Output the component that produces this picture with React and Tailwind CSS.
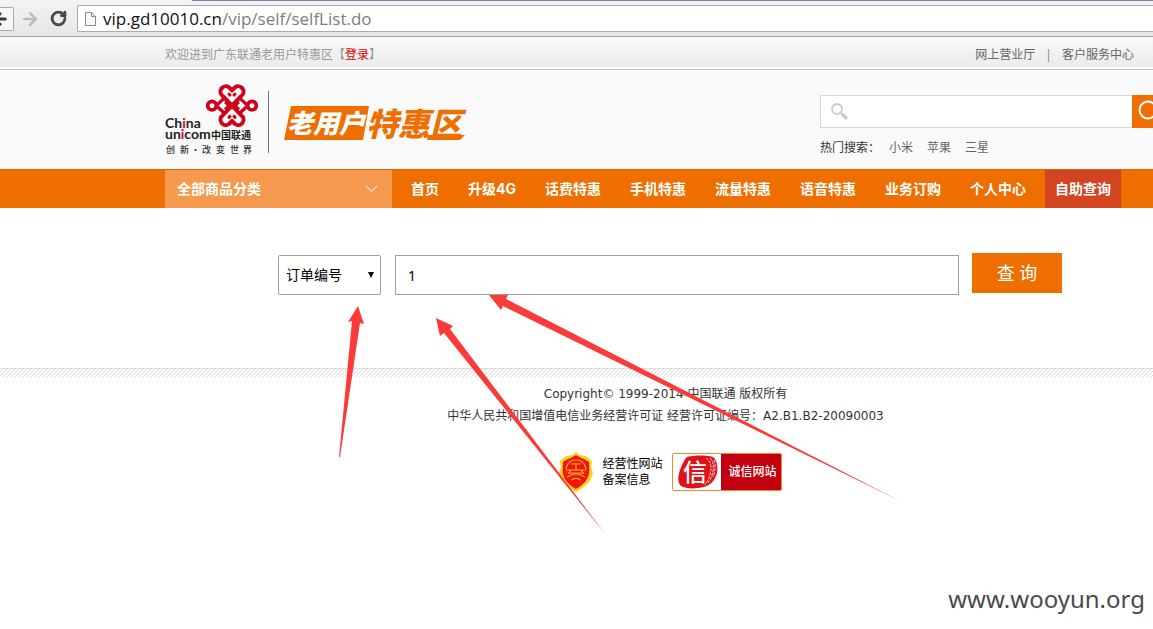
import React from "react";
import { ArrowLeft, ArrowRight, RotateCw } from "lucide-react";

const NAV_ITEMS = ["首页", "升级4G", "话费特惠", "手机特惠", "流量特惠", "语音特惠", "业务订购", "个人中心"];
const HOT_WORDS = ["小米", "苹果", "三星"];

function BrowserBar() {
  return (
    <div className="border-b border-[#a0a0a0] bg-gradient-to-b from-[#f4f4f4] to-[#e6e6e6]">
      <div className="ml-48 h-px bg-[#7f86a3]" />
      <div className="flex h-[35px] items-center">
        <button
          type="button"
          aria-label="后退"
          className="flex h-6 w-[14px] items-center justify-end overflow-hidden rounded-r-xs border border-l-0 border-[#a9a9a9] bg-[#f6f6f6] pr-1 text-[#333]"
        >
          <ArrowLeft size={18} strokeWidth={4} className="shrink-0" />
        </button>
        <button type="button" aria-label="前进" className="ml-1.5 text-[#bdbdbd]">
          <ArrowRight size={20} strokeWidth={3} />
        </button>
        <button type="button" aria-label="重新加载" className="ml-2.5 text-[#4a4a4a]">
          <RotateCw size={17} strokeWidth={4} />
        </button>
        <div className="ml-2.5 flex h-[27px] flex-1 items-center rounded-l-xs border border-r-0 border-[#ababab] bg-white pl-1.5">
          <svg width="13" height="16" viewBox="0 0 13 16" fill="none" stroke="#8a8a8a">
            <path d="M1.5 1.5h6l4 4v9h-10z" fill="#fafafa" />
            <path d="M7.5 1.5v4h4" />
          </svg>
          <span className="pl-1.5 font-['Open_Sans','Noto_Sans_CJK_SC',sans-serif] text-[17px] leading-6 text-[#7d7d7d]">
            <span className="text-[#111]">vip.gd10010.cn</span>/vip/self/selfList.do
          </span>
        </div>
      </div>
    </div>
  );
}

function TopBar() {
  return (
    <div className="border-b border-[#c8c8c8] bg-white pb-0.5 text-xs leading-6">
      <div className="bg-gradient-to-b from-[#f9f9f9] to-[#ebebeb] pt-1.5">
        <div className="mx-auto flex w-[1001px] text-[#999]">
          <p>
            欢迎进到广东联通老用户特惠区【<a href="#login" className="text-[#e00000]">登录</a>】
          </p>
          <div className="ml-auto flex gap-2.5 pr-8 text-[#666]">
            <a href="#hall">网上营业厅</a>
            <span className="text-[#888]">|</span>
            <a href="#service">客户服务中心</a>
          </div>
        </div>
      </div>
    </div>
  );
}

function Logo() {
  return (
    <svg width="310" height="80" viewBox="0 0 310 80" role="img" aria-label="中国联通 老用户特惠区">
      <g transform="translate(38 2) scale(.3333)" fill="none" stroke="#d0021b" strokeWidth="12" strokeLinejoin="round">
        <path d="M87 74 59 45A16 16 0 0 1 78 19L87 28 96 19A16 16 0 0 1 115 45Z" />
        <path d="M87 74 59 103A16 16 0 0 0 78 129L87 120 96 129A16 16 0 0 0 115 103Z" />
        <path d="M40 74 63 52 M40 74 63 96 M134 74 111 52 M134 74 111 96" strokeWidth="10" />
        <path d="M66 63 78 74 66 85 M108 63 96 74 108 85" strokeWidth="9" />
        <circle cx="27" cy="74" r="13" strokeWidth="11" />
        <circle cx="147" cy="74" r="13" strokeWidth="11" />
        <path d="M78 39l3 3 M96 39l-3 3 M78 109l3-3 M96 109l-3-3" strokeWidth="9" strokeLinecap="round" />
      </g>
      <g fill="#222" fontFamily="Lato, 'Noto Sans CJK SC', sans-serif">
        <text x="0" y="49" fontSize="14" fontWeight="700">Ch<tspan fill="#d0021b">i</tspan>na</text>
        <text x="0" y="60" fontSize="14" fontWeight="700">un<tspan fill="#d0021b">i</tspan>com</text>
        <text x="46" y="60" fontSize="10" fontWeight="700">中国联通</text>
      </g>
      <g fill="#333" fontSize="9" fontWeight="500" fontFamily="'Noto Sans CJK SC', sans-serif">
        <text x="1" y="74">创</text>
        <text x="15" y="74">新</text>
        <text x="26" y="74">·</text>
        <text x="37" y="74">改</text>
        <text x="51" y="74">变</text>
        <text x="65" y="74">世</text>
        <text x="78" y="74">界</text>
      </g>
      <path d="M103.500 12v62" stroke="#777" />
      <path d="M126 27h78l-6 34h-79z" fill="#ee6f00" />
      <path d="M262 61h33l5-5h-37z" fill="#ee6f00" />
      <g fontFamily="'Noto Sans CJK SC', sans-serif" fontWeight="900" fontStyle="italic">
        <text x="122" y="54" fontSize="26" fill="#fff">老用户</text>
        <text x="201" y="57" fontSize="32" fill="#ee6f00">特惠区</text>
      </g>
    </svg>
  );
}

function Header() {
  return (
    <header className="bg-[#fafafa]">
      <div className="mx-auto flex h-[99px] w-[1001px] items-start">
        <div className="pt-[9px]">
          <Logo />
        </div>
        <div className="ml-auto pt-[25px]">
          <form className="flex" onSubmit={(e) => e.preventDefault()}>
            <label className="flex h-[33px] w-[312px] items-center border border-r-0 border-[#d8d8d8] bg-white pl-2.5">
              <svg width="17" height="17" viewBox="0 0 17 17" fill="none" stroke="#c9c9c9">
                <circle cx="6" cy="6" r="5" strokeWidth="1.800" />
                <path d="M9.800 9.800l1.500 1.500" strokeWidth="1.500" />
                <path d="M11.800 11.800l3 3" strokeWidth="3.400" strokeLinecap="round" />
              </svg>
              <input type="search" aria-label="搜索" className="min-w-0 flex-1 bg-transparent px-2 text-xs outline-none" />
            </label>
            <button type="submit" aria-label="搜索" className="h-[33px] w-[34px] bg-[#ee6f00] pl-1.5">
              <svg width="24" height="26" viewBox="0 0 24 26" fill="none" stroke="#fff">
                <circle cx="10" cy="11" r="8.500" strokeWidth="2" />
                <path d="M16 17l5 5" strokeWidth="3" />
              </svg>
            </button>
          </form>
          <div className="flex gap-[9px] pt-[10px] text-xs leading-5 text-[#666]">
            <span className="text-[#333]">热门搜索：</span>
            <div className="flex gap-3.5">
              {HOT_WORDS.map((word) => (
                <a key={word} href="#search">{word}</a>
              ))}
            </div>
          </div>
        </div>
      </div>
    </header>
  );
}

function Navigation() {
  return (
    <nav className="border-t border-[#d2690a] bg-[#ee6f00] font-[Inter,'Noto_Sans_CJK_SC',sans-serif] text-sm font-bold leading-[38px] text-white">
      <div className="mx-auto flex w-[1001px] gap-[9px]">
        <button type="button" className="flex w-[227px] items-center justify-between bg-[#f4994d] pl-3 pr-3.5 text-left">
          全部商品分类
          <svg width="13" height="8" viewBox="0 0 13 8" fill="none" stroke="#fbd3ae" strokeWidth="1.500">
            <path d="M1 1l5.500 5.500L12 1" />
          </svg>
        </button>
        {NAV_ITEMS.map((item) => (
          <a key={item} href="#nav" className="px-2.5">{item}</a>
        ))}
        <a href="#query" aria-current="page" className="bg-[#d24520] px-2.5">自助查询</a>
      </div>
    </nav>
  );
}

function QueryForm() {
  return (
    <main className="mx-auto h-40 w-[1001px] pl-[113px] pt-[45px]">
      <form className="flex items-start" onSubmit={(e) => e.preventDefault()}>
        <div className="relative mt-0.5">
          <select
            aria-label="查询类型"
            className="h-10 w-[103px] appearance-none rounded-xs border border-[#a0a0a0] bg-white pl-[7px] text-sm text-black"
          >
            <option>订单编号</option>
          </select>
          <svg width="6" height="6" viewBox="0 0 6 6" className="pointer-events-none absolute right-[7px] top-[17px]">
            <path d="M0 0h6L3 6z" fill="#000" />
          </svg>
        </div>
        <input
          type="text"
          aria-label="订单编号"
          defaultValue="1"
          className="ml-3.5 mt-0.5 h-10 w-[564px] border border-[#a0a0a0] bg-white px-3 font-['Noto_Sans',sans-serif] text-sm text-black outline-none"
        />
        <button type="submit" className="ml-[13px] h-10 w-[90px] bg-[#ee6f00] text-lg text-white">
          查 询
        </button>
      </form>
    </main>
  );
}

function Footer() {
  return (
    <footer>
      <svg width="100%" height="9" className="block">
        <defs>
          <pattern id="hatch" width="4" height="4" patternUnits="userSpaceOnUse">
            <path d="M-1 5L5-1M-1 1L1-1M3 5L5 3" stroke="#cfcfcf" strokeWidth=".8" />
          </pattern>
        </defs>
        <rect width="100%" height="9" fill="url(#hatch)" />
        <path d="M0 .5h4000" stroke="#dedede" />
      </svg>
      <div className="pt-1.5 text-center font-['DejaVu_Sans','Noto_Sans_CJK_SC',sans-serif] text-xs leading-[22px] text-[#333]">
        <p>Copyright© 1999-2014 中国联通 版权所有</p>
        <p>中华人民共和国增值电信业务经营许可证 经营许可证编号：A2.B1.B2-20090003</p>
      </div>
      <div className="flex items-center justify-center gap-[9px] pl-2.5 pt-[25px]">
        <a href="#record" className="flex items-center gap-[9px] text-xs leading-4 text-black">
          <svg width="34" height="40" viewBox="0 0 34 40" fill="none" role="img" aria-label="备案徽标">
            <path d="M17 0l4 3 6 1 6 5-1 6 2 6-3 8-6 6-8 5-8-5-6-6-3-8 2-6-1-6 6-5 6-1z" fill="#ffd21c" />
            <path d="M17 3c4 3 8 3 13 7 0 4 1 7 0 12-2 7-6 11-13 15C10 33 6 29 4 22c-1-5 0-8 0-12 5-4 9-4 13-7z" fill="#ee170a" />
            <g stroke="#ffb01c" strokeWidth="1.200">
              <path d="M7 17c1-6 5-9 10-9s9 3 10 9M12 12h10M17 12v6M7 18h20M9 21l16 0M8 25c6-4 12-4 18 0M12 28c3-2 7-2 10 0M12 18l-3 4M22 18l3 4" />
            </g>
          </svg>
          <span>
            经营性网站
            <br />
            备案信息
          </span>
        </a>
        <a href="#credit" className="flex h-[38px] w-[110px] overflow-hidden rounded-xs border border-[#f08a30] bg-white">
          <svg width="48" height="36" viewBox="0 0 48 36" role="img" aria-label="信">
            <path d="M14 3c8-2 19-2 26 0 4 3 5 10 4 16-2 7-6 12-13 14-8 2-18 2-23-1-4-4-3-10-1-16 2-5 4-10 7-13z" fill="#df1119" />
            <path d="M33 4c3 2 5 5 5 10s-2 11-6 17M37 4c3 3 4 7 3 13s-3 9-5 12M41 6c2 5 1 12-1 17" fill="none" stroke="#fff" strokeWidth=".8" strokeDasharray="3 1" />
            <text x="10" y="27" fontSize="24" fontWeight="500" fill="#fff" fontFamily="'Noto Sans CJK SC', sans-serif">信</text>
          </svg>
          <span className="flex flex-1 items-center justify-center bg-[#c3000f] pl-1 text-xs font-medium text-white">诚信网站</span>
        </a>
      </div>
    </footer>
  );
}

function Annotations() {
  return (
    <svg width="1153" height="629" viewBox="0 0 1153 629" className="pointer-events-none absolute left-0 top-0" fill="#fb3a3a" aria-hidden="true">
      <path d="M358 306L364 324 360 323 340 457H339L352 321 348 322Z" />
      <path d="M436 318L453 326 450 329 606 535 444 333 440 336Z" />
      <path d="M489 295H508L506 299 900 501 503 306 501 310Z" />
    </svg>
  );
}

export default function App() {
  return (
    <div className="relative min-h-screen overflow-hidden bg-white font-['Noto_Sans','Noto_Sans_CJK_SC',sans-serif]">
      <BrowserBar />
      <div className="min-w-[1331px]">
        <TopBar />
        <Header />
        <Navigation />
        <QueryForm />
        <Footer />
      </div>
      <Annotations />
      <p className="absolute bottom-3 right-2 font-['Noto_Sans',sans-serif] text-2xl leading-9 text-[#4a4a4a]">www.wooyun.org</p>
    </div>
  );
}
